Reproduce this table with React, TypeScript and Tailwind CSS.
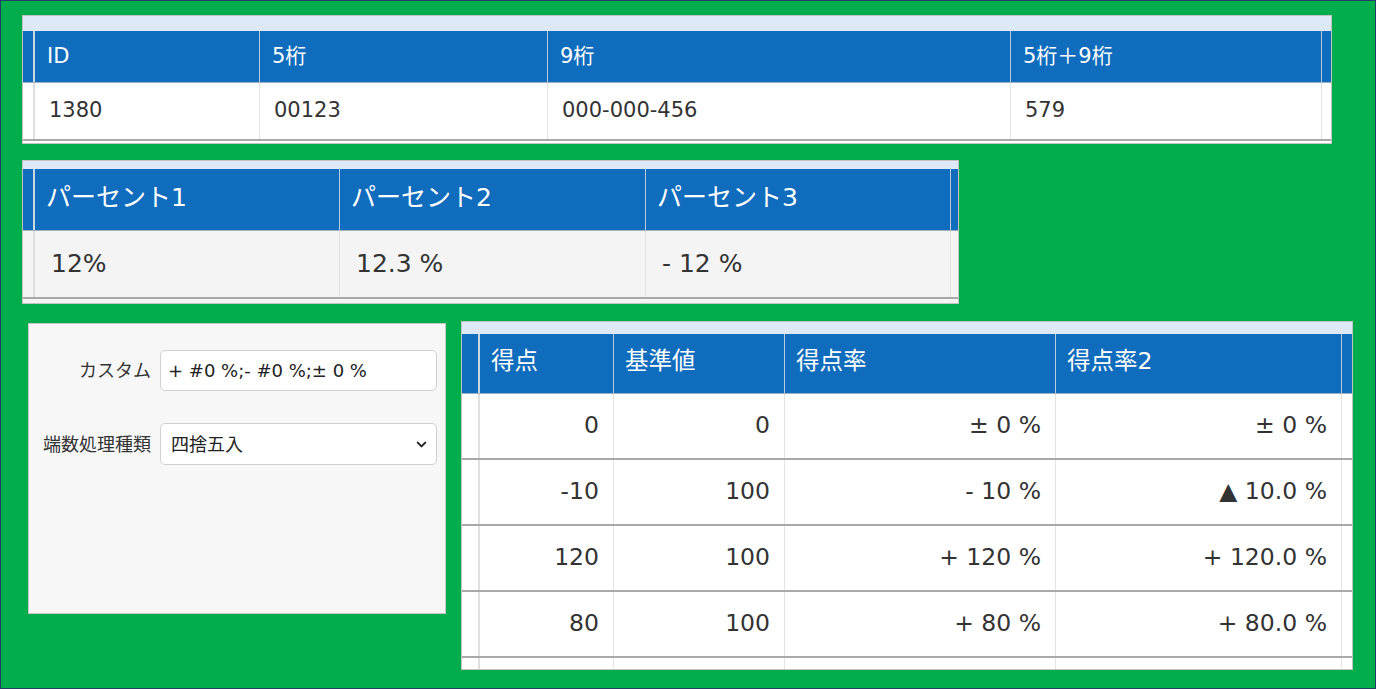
import { ChevronDown } from "lucide-react";

// column definitions for the three grids (class strings written in full)
const digitCols = [
  { key: "id", label: "ID", w: "w-[225px]", value: "1380" },
  { key: "d5", label: "5桁", w: "w-[288px]", value: "00123" },
  { key: "d9", label: "9桁", w: "w-[463px]", value: "000-000-456" },
  { key: "sum", label: "5桁＋9桁", w: "w-[311px]", value: "579" },
];

const percentCols = [
  { key: "p1", label: "パーセント1", w: "w-[305px]", value: "12%" },
  { key: "p2", label: "パーセント2", w: "w-[306px]", value: "12.3 %" },
  { key: "p3", label: "パーセント3", w: "w-[305px]", value: "- 12 %" },
];

const scoreCols = [
  { key: "score", label: "得点", w: "w-[134px]" },
  { key: "base", label: "基準値", w: "w-[171px]" },
  { key: "rate", label: "得点率", w: "w-[271px]" },
  { key: "rate2", label: "得点率2", w: "w-[286px]" },
];

const scoreRows = [
  ["0", "0", "± 0 %", "± 0 %"],
  ["-10", "100", "- 10 %", "▲ 10.0 %"],
  ["120", "100", "+ 120 %", "+ 120.0 %"],
  ["80", "100", "+ 80 %", "+ 80.0 %"],
];

// Verdana-like latin (DejaVu) with CJK fallback, close to Meiryo
const font = "font-['DejaVu_Sans','Noto_Sans_CJK_JP',sans-serif]";

function DigitGrid() {
  return (
    <div className="w-[1310px] border border-[#c3c3c3] bg-white">
      <div className="h-[15px] bg-[#dde9f7]" />
      <div className="flex h-[52px] bg-[#106cbd] text-[21px] text-white border-b border-[#9fb0c2]">
        <div className="w-[12px] border-r-2 border-[#c9d6e3]" />
        {digitCols.map((c) => (
          <div key={c.key} className={`${c.w} flex items-center pl-[12px] border-r border-[#bccbdb]`}>
            {c.label}
          </div>
        ))}
        <div className="flex-1" />
      </div>
      <div className="flex h-[58px] text-[21px] text-[#333] border-b-2 border-[#a8a8a8]">
        <div className="w-[12px] border-r-2 border-[#dedede]" />
        {digitCols.map((c) => (
          <div key={c.key} className={`${c.w} flex items-center pl-[14px] border-r border-[#e3e3e3]`}>
            {c.value}
          </div>
        ))}
        <div className="flex-1" />
      </div>
      <div className="h-[2px]" />
    </div>
  );
}

function PercentGrid() {
  return (
    <div className="w-[937px] border border-[#c3c3c3] bg-white">
      <div className="h-[8px] bg-[#dde9f7]" />
      <div className="flex h-[62px] bg-[#106cbd] text-[25px] text-white border-b border-[#9fb0c2]">
        <div className="w-[12px] border-r-2 border-[#c9d6e3]" />
        {percentCols.map((c) => (
          <div key={c.key} className={`${c.w} flex items-center pl-[11px] pb-[4px] border-r border-[#bccbdb]`}>
            {c.label}
          </div>
        ))}
        <div className="flex-1" />
      </div>
      <div className="flex h-[68px] bg-[#f4f4f4] text-[25px] text-[#333] border-b-2 border-[#a8a8a8]">
        <div className="w-[12px] border-r-2 border-[#dedede]" />
        {percentCols.map((c) => (
          <div key={c.key} className={`${c.w} flex items-center pl-[16px] border-r border-[#e3e3e3]`}>
            {c.value}
          </div>
        ))}
        <div className="flex-1" />
      </div>
      <div className="h-[4px] bg-[#f4f4f4]" />
    </div>
  );
}

function FormatPanel() {
  return (
    <div className="ml-[6px] mt-[2px] h-[291px] w-[418px] border border-[#c6c6c6] bg-[#f7f7f7] pt-[26px] text-[18px] text-[#333]">
      <div className="flex items-center">
        <label className="w-[122px] text-right">カスタム</label>
        <input
          className="ml-[9px] h-[41px] w-[277px] rounded-[5px] border border-[#d0d0d0] bg-white pl-[7px] text-[18px] text-[#222] outline-none"
          defaultValue="+ #0 %;- #0 %;± 0 %"
        />
      </div>
      <div className="mt-[32px] flex items-center">
        <label className="w-[122px] text-right">端数処理種類</label>
        <div className="relative ml-[9px]">
          <select className="h-[42px] w-[277px] appearance-none rounded-[5px] border border-[#d0d0d0] bg-white pl-[10px] text-[#222] outline-none">
            <option>四捨五入</option>
          </select>
          <ChevronDown className="pointer-events-none absolute right-[8px] top-[14px] h-[15px] w-[15px] text-[#222]" strokeWidth={3.2} />
        </div>
      </div>
    </div>
  );
}

function ScoreGrid() {
  return (
    <div className="ml-[15px] h-[349px] w-[892px] overflow-hidden border border-[#c3c3c3] bg-white">
      <div className="h-[12px] bg-[#dde9f7]" />
      <div className="flex h-[60px] bg-[#106cbd] text-[23.5px] text-white border-b border-[#9fb0c2]">
        <div className="w-[18px] border-r-2 border-[#c9d6e3]" />
        {scoreCols.map((c) => (
          <div key={c.key} className={`${c.w} flex items-center pl-[11px] pb-[3px] border-r border-[#bccbdb]`}>
            {c.label}
          </div>
        ))}
        <div className="flex-1" />
      </div>
      {scoreRows.map((row, i) => (
        <div key={i} className="flex h-[66px] text-[23.5px] text-[#333] border-b-2 border-[#a9a9a9]">
          <div className="w-[18px] border-r-2 border-[#e0e0e0]" />
          {scoreCols.map((c, j) => (
            <div key={c.key} className={`${c.w} flex items-center justify-end pr-[14px] border-r border-[#e3e3e3]`}>
              {row[j]}
            </div>
          ))}
          <div className="flex-1" />
        </div>
      ))}
      <div className="flex h-[11px]">
        <div className="w-[18px] border-r-2 border-[#e0e0e0]" />
        {scoreCols.map((c) => (
          <div key={c.key} className={`${c.w} border-r border-[#e3e3e3]`} />
        ))}
      </div>
    </div>
  );
}

export default function App() {
  return (
    <div className={`${font} h-[689px] w-[1376px] overflow-hidden border border-[#243d63] bg-[#00ad4d] pl-[21px] pt-[14px]`}>
      <DigitGrid />
      <div className="mt-[16px]">
        <PercentGrid />
      </div>
      <div className="mt-[17px] flex items-start">
        <FormatPanel />
        <ScoreGrid />
      </div>
    </div>
  );
}
